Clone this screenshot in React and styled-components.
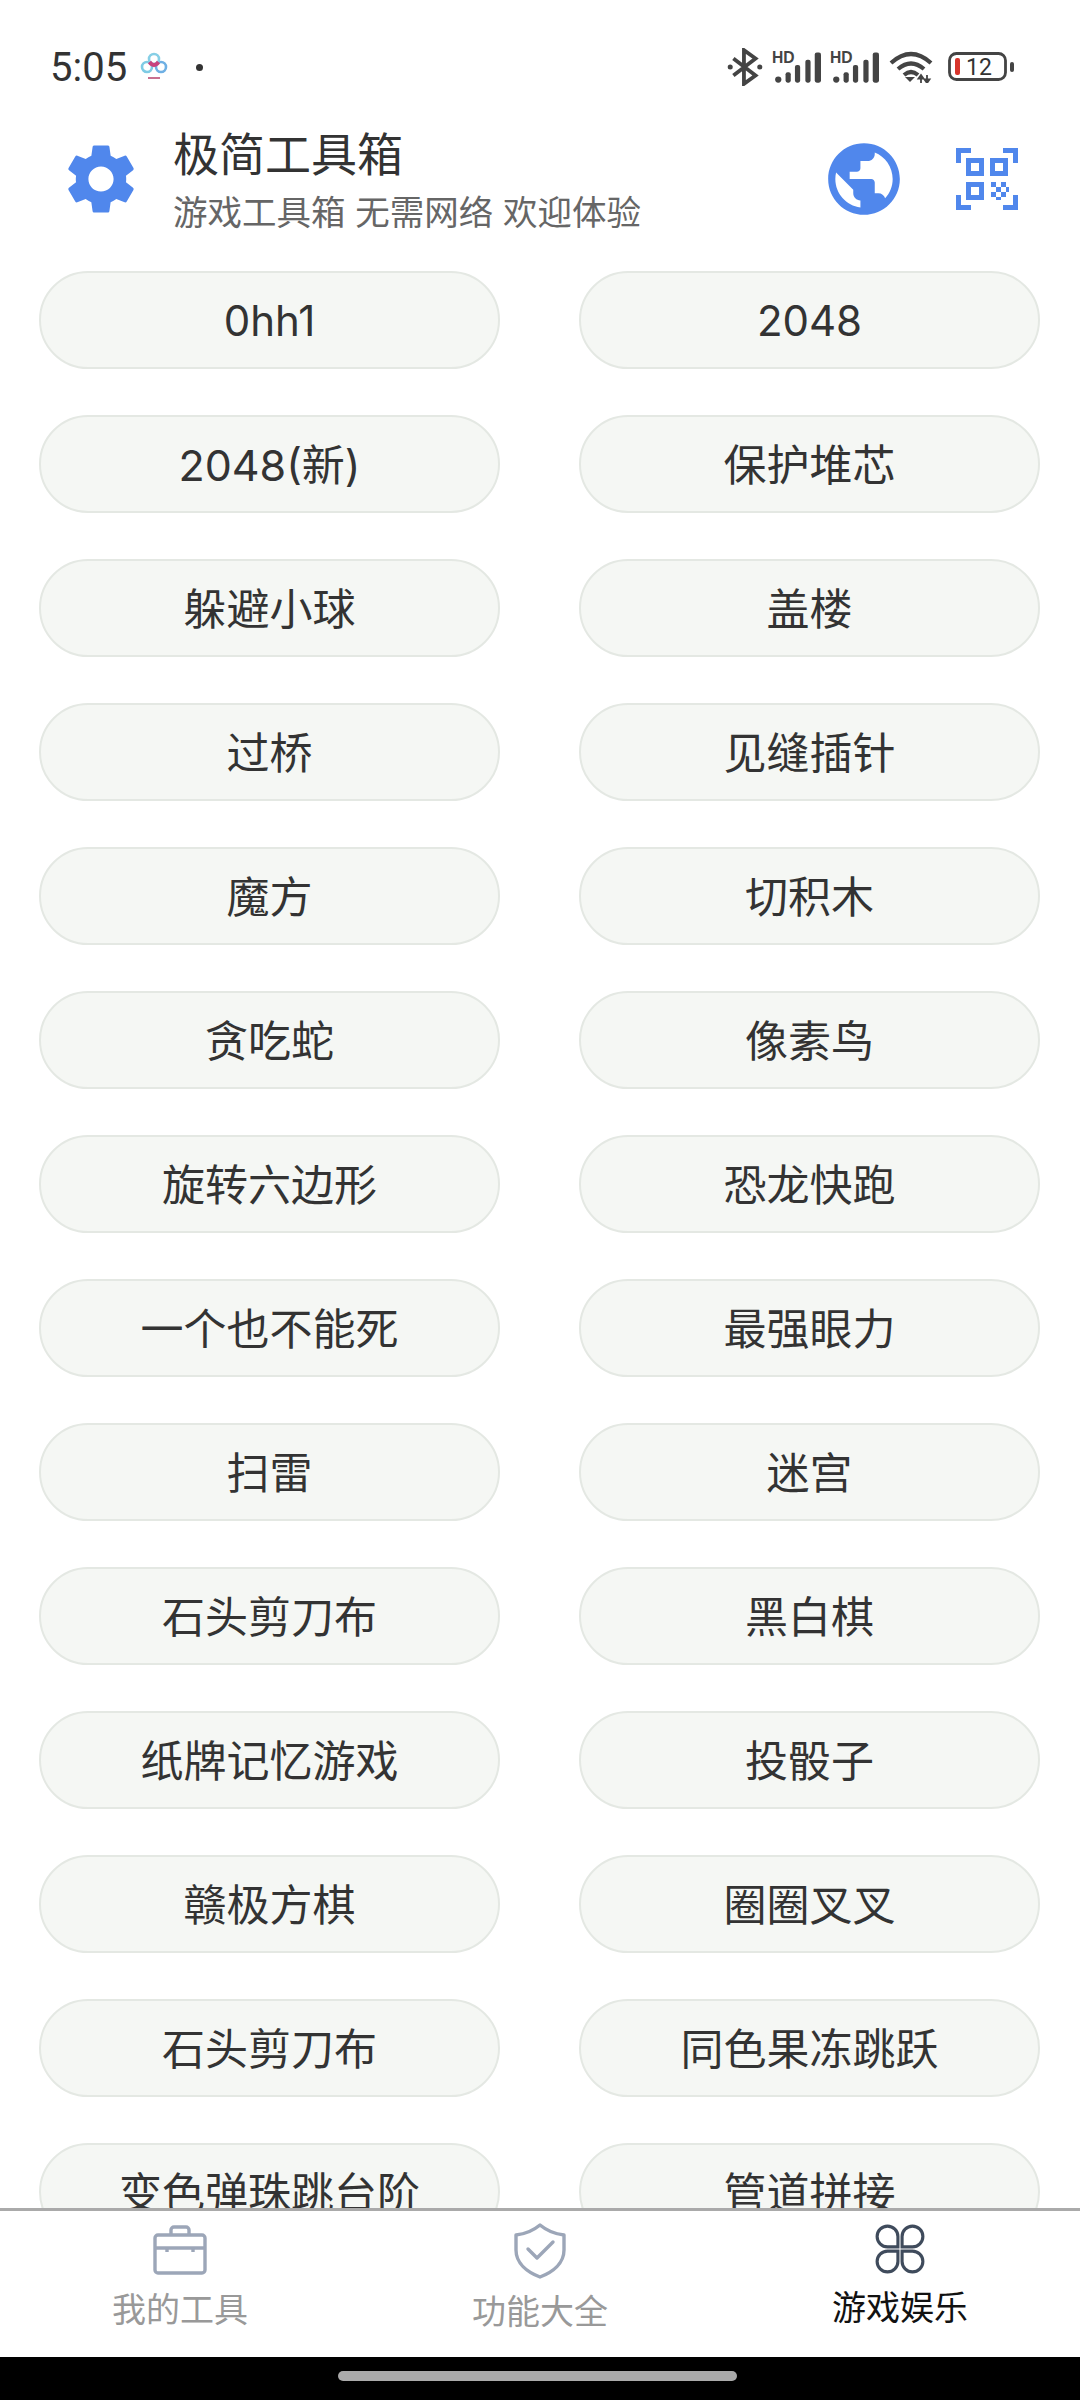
import React from "react";
import styled, { createGlobalStyle } from "styled-components";

const BLUE = "#5087ec";

const games = [
  "0hh1", "2048", "2048(新)", "保护堆芯", "躲避小球", "盖楼", "过桥", "见缝插针",
  "魔方", "切积木", "贪吃蛇", "像素鸟", "旋转六边形", "恐龙快跑", "一个也不能死", "最强眼力",
  "扫雷", "迷宫", "石头剪刀布", "黑白棋", "纸牌记忆游戏", "投骰子", "赣极方棋", "圈圈叉叉",
  "石头剪刀布", "同色果冻跳跃", "变色弹珠跳台阶", "管道拼接",
];

const isLatin = (name) => /^[\x00-\x7f]+$/.test(name);

const Signal = () => (
  <SignalIcon viewBox="0 0 47 30">
    <SignalLabel x="0" y="11">HD</SignalLabel>
    <rect x="3" y="24" width="6" height="6" rx="3" fill="#444" />
    <rect x="13" y="20" width="5" height="10" rx="2" fill="#444" />
    <rect x="22" y="13" width="5" height="17" rx="2" fill="#444" />
    <rect x="32" y="8" width="5" height="22" rx="2" fill="#444" />
    <rect x="41" y="1" width="6" height="29" rx="2" fill="#444" />
  </SignalIcon>
);

const Home = () => (
  <>
    <GlobalStyle />
    <Screen>
      <StatusBar>
        <StatusLeft>
          <Clock>5:05</Clock>
          <svg width="28" height="32" viewBox="0 0 28 32" fill="none" strokeWidth="2.6">
            <circle cx="7" cy="16" r="5" stroke="#7fcbe4" />
            <circle cx="21" cy="16" r="5" stroke="#6fb0e4" />
            <circle cx="14" cy="8" r="5" stroke="#86cfe6" />
            <path d="M9.5 11 Q14 17 18.5 11" stroke="#c8437f" strokeWidth="4" />
            <rect x="8" y="26" width="12" height="2" fill="#c9708f" />
          </svg>
          <Dot />
        </StatusLeft>
        <StatusRight>
          <svg width="36" height="38" viewBox="0 0 34 36" fill="none" stroke="#444" strokeWidth="3.6">
            <path d="M6 10 L27 26 L16 34 V2 L27 10 L6 26" />
            <circle cx="3" cy="18" r="2.4" fill="#444" stroke="none" />
            <circle cx="31" cy="18" r="2.4" fill="#444" stroke="none" />
          </svg>
          <Signal />
          <Signal />
          <WifiIcon width="46" height="32" viewBox="0 0 46 32" fill="none" stroke="#444" strokeWidth="4.2">
            <path d="M3 12 Q23 -6 43 12" />
            <path d="M10 18 Q23 7 36 18" />
            <path d="M16 24 Q23 18 30 24" />
            <path d="M17 26 H27 L22 31 Z" fill="#444" stroke="none" />
            <path d="M33 32 V25 M30.5 27.5 L33 24 L35.5 27.5 Z M39 24 V31 M36.5 28.5 L39 32 L41.5 28.5 Z" strokeWidth="1.8" fill="#444" />
          </WifiIcon>
          <svg width="66" height="30" viewBox="0 0 66 30">
            <rect x="1.5" y="1.5" width="56" height="26" rx="7" fill="none" stroke="#444" strokeWidth="2.8" />
            <rect x="7" y="6" width="5" height="17" rx="2" fill="#d8352c" />
            <BatteryText x="18" y="23">12</BatteryText>
            <rect x="62" y="10" width="4" height="10" rx="2" fill="#444" />
          </svg>
        </StatusRight>
      </StatusBar>

      <Header>
        <svg width="84" height="84" viewBox="0 0 24 24" fill={BLUE}>
          <path d="M19.14 12.94c.04-.3.06-.61.06-.94 0-.32-.02-.64-.07-.94l2.03-1.58c.18-.14.23-.41.12-.61l-1.92-3.32c-.12-.22-.37-.29-.59-.22l-2.39.96c-.5-.38-1.03-.7-1.62-.94l-.36-2.54c-.04-.24-.24-.41-.48-.41h-3.84c-.24 0-.43.17-.47.41l-.36 2.54c-.59.24-1.13.57-1.62.94l-2.39-.96c-.22-.08-.47 0-.59.22L2.74 8.87c-.12.21-.08.47.12.61l2.03 1.58c-.05.3-.09.63-.09.94s.02.64.07.94l-2.03 1.58c-.18.14-.23.41-.12.61l1.92 3.32c.12.22.37.29.59.22l2.39-.96c.5.38 1.03.7 1.62.94l.36 2.54c.05.24.24.41.48.41h3.84c.24 0 .44-.17.47-.41l.36-2.54c.59-.24 1.13-.56 1.62-.94l2.39.96c.22.08.47 0 .59-.22l1.92-3.32c.12-.22.07-.47-.12-.61l-2.01-1.58zM12 15.6c-1.98 0-3.6-1.62-3.6-3.6s1.62-3.6 3.6-3.6 3.6 1.62 3.6 3.6-1.62 3.6-3.6 3.6z" />
        </svg>
        <TitleBlock>
          <Title>极简工具箱</Title>
          <Subtitle>游戏工具箱 无需网络 欢迎体验</Subtitle>
        </TitleBlock>
        <svg width="86" height="86" viewBox="0 0 24 24" fill={BLUE}>
          <path d="M12 2C6.48 2 2 6.48 2 12s4.48 10 10 10 10-4.48 10-10S17.52 2 12 2zm-1 17.93c-3.95-.49-7-3.85-7-7.93 0-.62.08-1.21.21-1.79L9 15v1c0 1.1.9 2 2 2v1.93zm6.9-2.54c-.26-.81-1-1.39-1.9-1.39h-1v-3c0-.55-.45-1-1-1H8v-2h2c.55 0 1-.45 1-1V7h2c1.1 0 2-.9 2-2v-.41c2.93 1.19 5 4.06 5 7.41 0 2.08-.8 3.97-2.1 5.39z" />
        </svg>
        <QrIcon width="62" height="62" viewBox="0 0 62 62" fill={BLUE}>
          <path d="M0 0H15V5H5V15H0Z M62 0H47V5H57V15H62Z M0 62H15V57H5V47H0Z M62 62H47V57H57V47H62Z" />
          <path fillRule="evenodd" d="M10 10H28V28H10Z M15 15V23H23V15Z M34 10H52V28H34Z M39 15V23H47V15Z M10 34H28V52H10Z M15 39V47H23V39Z" />
          <path d="M35 34h5v5h-5z M45 34h5v5h-5z M40 39h5v5h-5z M35 44h5v5h-5z M45 44h5v5h-5z M50 39h3v5h-3z M40 49h5v3h-5z" />
        </QrIcon>
      </Header>

      <Content>
        <GameGrid>
          {games.map((name, i) => (
            <GameButton key={i} $latin={isLatin(name)}>{name}</GameButton>
          ))}
        </GameGrid>
      </Content>

      <TabBar>
        <Tab>
          <svg width="54" height="54" viewBox="0 0 54 54" fill="none" stroke="#9ca6b8" strokeWidth="3.4">
            <rect x="2" y="12" width="50" height="38" rx="3" />
            <path d="M18 12 V7 a3 3 0 0 1 3-3 H33 a3 3 0 0 1 3 3 V12" />
            <path d="M2 25 H52" />
            <path d="M14 25 V29 M40 25 V29" />
          </svg>
          <TabLabel>我的工具</TabLabel>
        </Tab>
        <Tab>
          <svg width="54" height="56" viewBox="0 0 54 56" fill="none" stroke="#9ca6b8" strokeWidth="3.4" strokeLinejoin="round" strokeLinecap="round">
            <path d="M27 2 C33 7 42 11 51 12 V27 C51 40 40 49 27 54 C14 49 3 40 3 27 V12 C12 11 21 7 27 2 Z" />
            <path d="M15 26 L24 35 L40 19" />
          </svg>
          <TabLabel>功能大全</TabLabel>
        </Tab>
        <Tab>
          <svg width="52" height="52" viewBox="0 0 50 50" fill="none" stroke="#3f4b5c" strokeWidth="3">
            <path d="M23 23 H13 a10 10 0 1 1 10 -10 Z" />
            <path d="M27 23 h10 a10 10 0 1 0 -10 -10 Z" />
            <path d="M23 27 H13 a10 10 0 1 0 10 10 Z" />
            <path d="M27 27 h10 a10 10 0 1 1 -10 10 Z" />
          </svg>
          <TabLabel $active>游戏娱乐</TabLabel>
        </Tab>
      </TabBar>

      <NavBar>
        <HomeHandle />
      </NavBar>
    </Screen>
  </>
);

const GlobalStyle = createGlobalStyle`
  html, body {
    margin: 0;
    padding: 0;
    background: #fff;
  }
  body {
    font-family: "Inter", "Noto Sans CJK SC", sans-serif;
  }
`;

const Screen = styled.div`
  width: 1080px;
  height: 2400px;
  display: flex;
  flex-direction: column;
  overflow: hidden;
  background: #fff;
`;

const StatusBar = styled.div`
  height: 120px;
  flex-shrink: 0;
  display: flex;
  align-items: center;
  justify-content: space-between;
  padding: 14px 66px 0 50px;
  box-sizing: border-box;
`;

const StatusLeft = styled.div`
  display: flex;
  align-items: center;
  gap: 13px;
`;

const Clock = styled.span`
  font-family: "Roboto", sans-serif;
  font-size: 40px;
  color: #333;
`;

const Dot = styled.span`
  width: 7px;
  height: 7px;
  border-radius: 50%;
  background: #333;
  margin-left: 15px;
`;

const StatusRight = styled.div`
  display: flex;
  align-items: center;
  gap: 9px;
`;

const SignalIcon = styled.svg`
  width: 49px;
  height: 32px;
  overflow: visible;
`;

const WifiIcon = styled.svg`
  margin-right: 5px;
`;

const SignalLabel = styled.text`
  font-family: "Liberation Sans", sans-serif;
  font-size: 15px;
  font-weight: 700;
  fill: #444;
`;

const BatteryText = styled.text`
  font-family: "Roboto", sans-serif;
  font-size: 23px;
  fill: #333;
`;

const Header = styled.header`
  height: 118px;
  flex-shrink: 0;
  display: flex;
  align-items: center;
  padding: 0 62px 0 59px;
  box-sizing: border-box;
`;

const TitleBlock = styled.div`
  flex: 1;
  display: flex;
  flex-direction: column;
  gap: 9px;
  margin-left: 30px;
  padding-bottom: 4px;
  font-family: "Noto Sans CJK SC", sans-serif;
`;

const Title = styled.div`
  font-size: 46px;
  line-height: 56px;
  color: #333;
`;

const Subtitle = styled.div`
  font-size: 34.5px;
  line-height: 44px;
  word-spacing: 2px;
  color: #666;
`;

const QrIcon = styled.svg`
  margin-left: 49px;
`;

const Content = styled.main`
  flex: 1;
  min-height: 0;
  overflow: hidden;
  padding-top: 33px;
`;

const GameGrid = styled.div`
  display: grid;
  grid-template-columns: 461px 461px;
  column-gap: 79px;
  row-gap: 46px;
  padding: 0 39px;
`;

const GameButton = styled.div`
  height: 98px;
  box-sizing: border-box;
  display: flex;
  align-items: center;
  justify-content: center;
  padding-bottom: ${(p) => (p.$latin ? "0" : "4px")};
  border: 2px solid #e4e8e3;
  border-radius: 49px;
  background: #f5f7f4;
  font-size: ${(p) => (p.$latin ? "42px" : "43px")};
  color: #333;
`;

const TabBar = styled.nav`
  height: 149px;
  flex-shrink: 0;
  display: grid;
  grid-template-columns: repeat(3, 1fr);
  border-top: 3px solid #aaa;
  box-sizing: border-box;
  background: #fff;
`;

const Tab = styled.div`
  display: flex;
  flex-direction: column;
  align-items: center;
  padding-top: 12px;
`;

const TabLabel = styled.span`
  font-family: "Noto Sans CJK SC", sans-serif;
  font-size: 34px;
  line-height: 44px;
  margin-top: 9px;
  color: ${(p) => (p.$active ? "#111" : "#999")};
`;

const NavBar = styled.div`
  height: 43px;
  flex-shrink: 0;
  display: flex;
  justify-content: center;
  padding-top: 14px;
  box-sizing: border-box;
  background: #000;
`;

const HomeHandle = styled.div`
  width: 399px;
  height: 10px;
  margin-right: 5px;
  border-radius: 5px;
  background: #aaa;
`;

export default Home;
